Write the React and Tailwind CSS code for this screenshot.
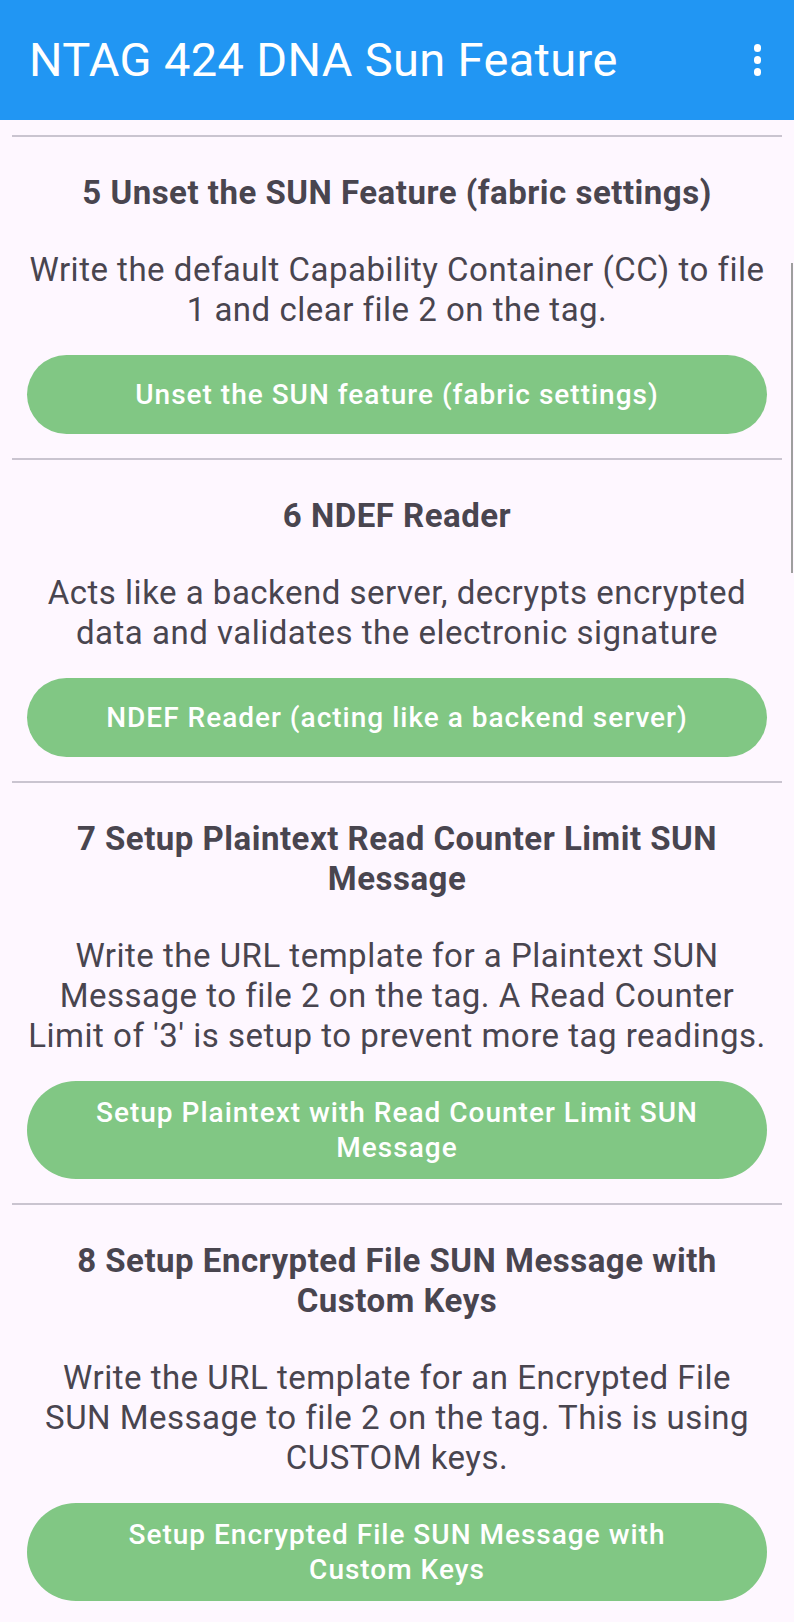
import React from 'react';

const sections = [
    {
        title: '5 Unset the SUN Feature (fabric settings)',
        text: 'Write the default Capability Container (CC) to file 1 and clear file 2 on the tag.',
        button: 'Unset the SUN feature (fabric settings)',
    },
    {
        title: '6 NDEF Reader',
        text: 'Acts like a backend server, decrypts encrypted data and validates the electronic signature',
        button: 'NDEF Reader (acting like a backend server)',
    },
    {
        title: '7 Setup Plaintext Read Counter Limit SUN Message',
        text: "Write the URL template for a Plaintext SUN Message to file 2 on the tag. A Read Counter Limit of '3' is setup to prevent more tag readings.",
        button: 'Setup Plaintext with Read Counter Limit SUN Message',
    },
    {
        title: '8 Setup Encrypted File SUN Message with Custom Keys',
        text: 'Write the URL template for an Encrypted File SUN Message to file 2 on the tag. This is using CUSTOM keys.',
        button: 'Setup Encrypted File SUN Message with Custom Keys',
    },
];

const Section = ({ title, text, button }) => (
    <div>
        <div className="h-[2px] bg-[#cac4d0]" />
        <div className="px-[15px] pt-[36px] pb-[24px] flex flex-col items-center text-center">
            <h2 className="text-[33px] leading-[40px] font-bold tracking-[0.5px] text-[#49454f]">{title}</h2>
            <p className="mt-[37px] text-[33px] leading-[40px] tracking-[0.5px] text-[#49454f]">{text}</p>
            <button className="mt-[25px] w-full min-h-[79px] py-[14px] px-[56px] rounded-full bg-[#81c784] text-white text-[28px] leading-[35px] font-medium tracking-[1px] flex items-center justify-center">
                {button}
            </button>
        </div>
    </div>
);

export default function App() {
    return (
        <div className="relative w-[794px] h-[1622px] overflow-hidden bg-[#fef7ff]" style={{ fontFamily: 'Roboto, "Noto Sans", sans-serif' }}>
            <header className="h-[120px] bg-[#2196f3] flex items-center justify-between pl-[29px] pr-[33px]">
                <h1 className="text-[47px] text-white font-normal tracking-[0.35px]">NTAG 424 DNA Sun Feature</h1>
                {/* overflow menu */}
                <div className="flex flex-col gap-[4.5px]">
                    <span className="w-[7.5px] h-[7.5px] rounded-full bg-white" />
                    <span className="w-[7.5px] h-[7.5px] rounded-full bg-white" />
                    <span className="w-[7.5px] h-[7.5px] rounded-full bg-white" />
                </div>
            </header>

            <main className="px-[12px] pt-[15px]">
                {sections.map((s) => (
                    <Section key={s.title} {...s} />
                ))}
            </main>

            {/* scrollbar */}
            <div className="absolute right-[1px] top-[263px] w-[2px] h-[310px] bg-[#9e9e9e]" />
        </div>
    );
}
